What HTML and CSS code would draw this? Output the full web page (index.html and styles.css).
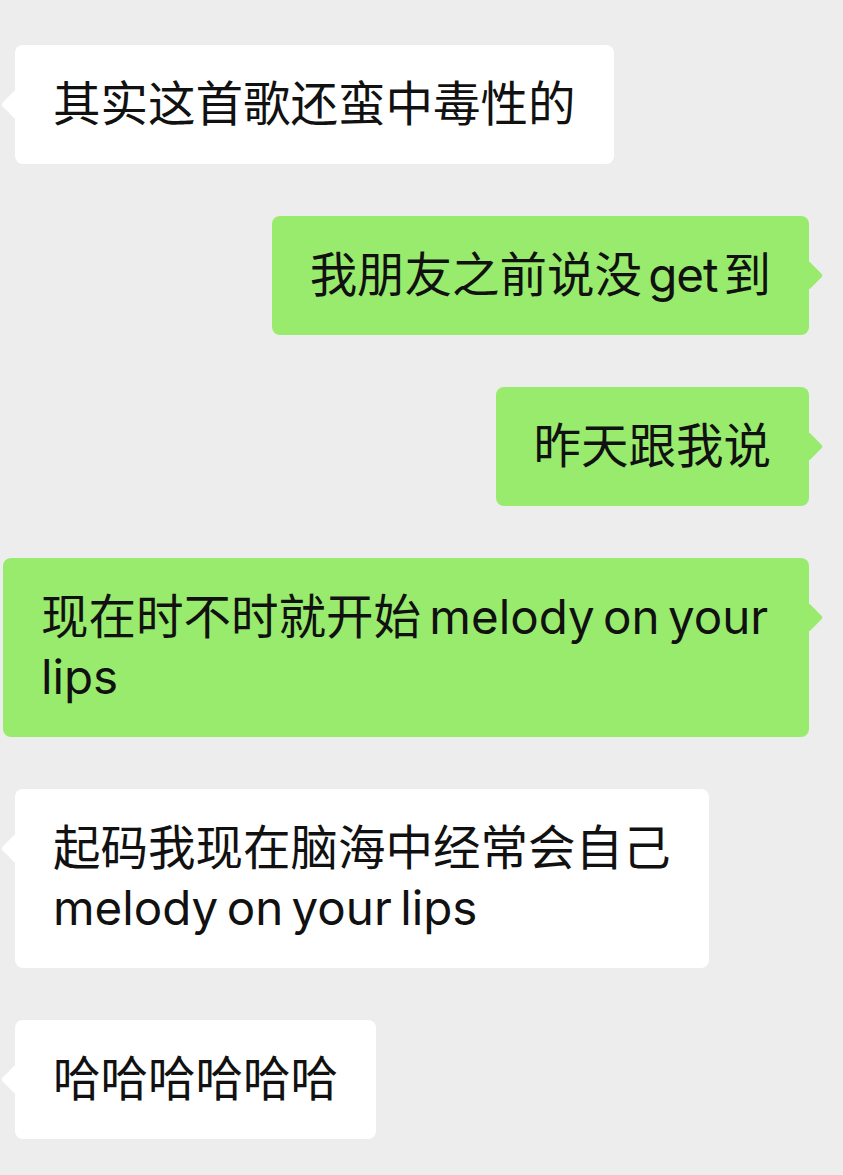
FILE: index.html
```html
<!DOCTYPE html>
<html>
<head>
<meta charset="UTF-8">
<title>聊天记录</title>
<link rel="stylesheet" href="styles.css">
</head>
<body>
	<div class="chat">
		<div class="row left">
			<div class="bubble">其实这首歌还蛮中毒性的</div>
		</div>
		<div class="row right">
			<div class="bubble">我朋友之前说没<span class="en">get</span>到</div>
		</div>
		<div class="row right">
			<div class="bubble">昨天跟我说</div>
		</div>
		<div class="row right">
			<div class="bubble">现在时不时就开始 melody on your lips</div>
		</div>
		<div class="row left">
			<div class="bubble">起码我现在脑海中经常会自己<br>melody on your lips</div>
		</div>
		<div class="row left">
			<div class="bubble">哈哈哈哈哈哈</div>
		</div>
	</div>
</body>
</html>
```

FILE: styles.css
```css
* {
	margin: 0;
	padding: 0;
	box-sizing: border-box;
}

body {
	background: #ededed;
	font-family: Inter, "Noto Sans CJK SC", sans-serif;
	color: #111;
}

.chat {
	display: flex;
	flex-direction: column;
	gap: 52px;
	padding-top: 45px;
	height: 1175px;
}

.row {
	display: flex;
}

.row.left {
	justify-content: flex-start;
	padding-left: 15px;
}

.row.right {
	justify-content: flex-end;
	padding-right: 34px;
}

.bubble {
	position: relative;
	max-width: 806px;
	padding: 29px 38px 30px 38px;
	font-size: 47.5px;
	line-height: 60px;
	word-spacing: -5px;
	border-radius: 8px;
	background: #fff;
}

.right .bubble {
	background: #98eb6d;
}

.en {
	margin: 0 6px;
	letter-spacing: -1px;
}

/* 小三角 */
.bubble::before {
	content: "";
	position: absolute;
	top: 49px;
	width: 21px;
	height: 21px;
	border-radius: 3px;
	transform: rotate(45deg);
	background: inherit;
}

.left .bubble::before {
	left: -10px;
}

.right .bubble::before {
	right: -10px;
}
```
